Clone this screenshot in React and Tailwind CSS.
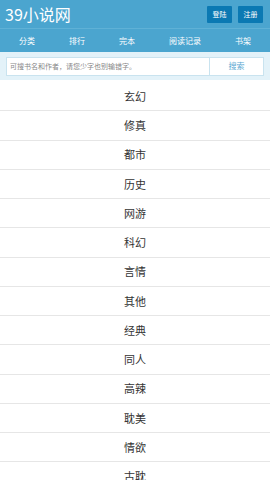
const font = { fontFamily: '"Noto Sans CJK SC", "Noto Sans", sans-serif' };

const NAV = ["分类", "排行", "完本", "阅读记录", "书架"];
const CATS = ["玄幻", "修真", "都市", "历史", "网游", "科幻", "言情", "其他", "经典", "同人", "高辣", "耽美", "情欲", "古耽"];

export default function App() {
  return (
    <div className="w-[270px] h-[480px] overflow-hidden bg-white" style={font}>
      {/* top bar */}
      <div className="bg-[#4ba5cf] h-[29px] flex items-center justify-between pl-[5px] pr-[7px] border-b border-[#5fb1d6]">
        <span className="text-white text-[16px] leading-none">39小说网</span>
        <div className="flex gap-[6px]">
          <span className="bg-[#0b79b3] text-white text-[7px] w-[25px] h-[17px] flex items-center justify-center rounded-[1px]">登陆</span>
          <span className="bg-[#0b79b3] text-white text-[7px] w-[25px] h-[17px] flex items-center justify-center rounded-[1px]">注册</span>
        </div>
      </div>

      {/* nav */}
      <div className="bg-[#4ba5cf] h-[23px] flex items-center justify-around px-[2px]">
        {NAV.map((n) => (
          <span key={n} className="text-white text-[8px] leading-none">{n}</span>
        ))}
      </div>

      {/* search */}
      <div className="bg-[#e3f2f9] h-[28px] flex items-center px-[6px]">
        <div className="flex w-full h-[19px] bg-white border border-[#c9e3ef]">
          <div className="flex-1 flex items-center pl-[3px] text-[7px] text-[#888]">可搜书名和作者，请您少字也别输错字。</div>
          <div className="w-[54px] border-l border-[#c9e3ef] flex items-center justify-center text-[8px] text-[#5aa8d2]">搜索</div>
        </div>
      </div>

      {/* categories */}
      <div className="mt-[2px]">
        {CATS.map((c) => (
          <div key={c} className="h-[29.25px] border-b border-[#e6e6e6] flex items-center justify-center text-[11px] text-[#333]">
            {c}
          </div>
        ))}
      </div>
    </div>
  );
}
